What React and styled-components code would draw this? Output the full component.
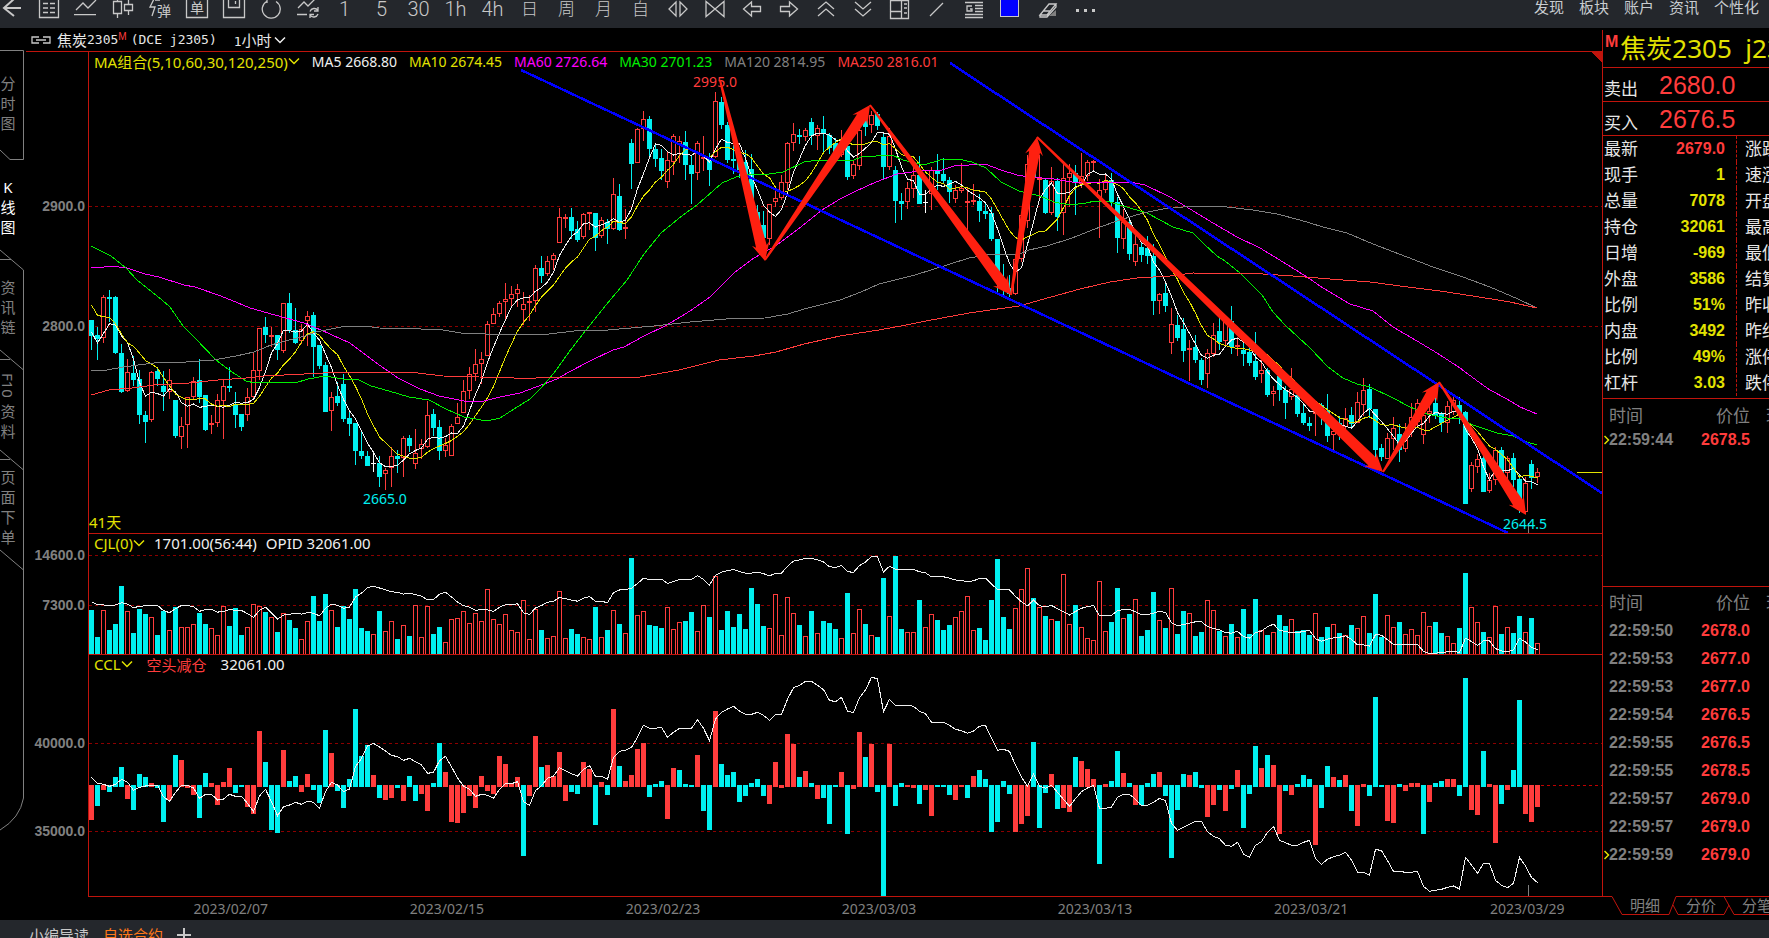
import styled, { createGlobalStyle } from "styled-components";

const RED = "#ff3c3c";
const CYAN = "#00f0f0";
const LINE = "#c0140c";
const YELLOW = "#e2e200";

const GlobalStyle = createGlobalStyle`
  * {
    box-sizing: border-box;
  }

  body {
    margin: 0;
    background: #000;
    overflow: hidden;
    font-family: "Noto Sans", "Noto Sans CJK SC", sans-serif;
    font-size: 14px;
    color: #e6e6e6;
  }

  button {
    padding: 0;
    border: none;
    background: none;
    font: inherit;
    color: inherit;
    cursor: pointer;
  }

  svg {
    display: block;
  }
`;

const Page = styled.div`
  display: flex;
  flex-direction: column;
  height: 100vh;
`;

const Toolbar = styled.header`
  display: flex;
  justify-content: space-between;
  align-items: flex-start;
  height: 28px;
  flex: none;
  background: #24272c;
  color: #c8c8c8;
  overflow: hidden;
`;

const Tools = styled.div`
  display: flex;
  margin-left: -7px;
`;

const ToolButton = styled.button`
  display: flex;
  justify-content: center;
  width: 37px;
  height: 18px;
  line-height: 18px;
  font-family: Roboto, "Noto Sans CJK SC", sans-serif;
  font-size: ${(p) => (p.$cjk ? 17 : 20)}px;
  font-weight: 300;
`;

const Menu = styled.nav`
  display: flex;
  gap: 15px;
  padding-right: 10px;
`;

const MenuLink = styled.a`
  font-size: 15px;
  line-height: 15px;
  color: #c8ccd0;
  text-decoration: none;
`;

const Body = styled.div`
  display: flex;
  flex: 1;
  min-height: 0;
`;

const SideTabs = styled.nav`
  position: relative;
  width: 26px;
  flex: none;
  padding-top: 22px;
`;

const SideFrame = styled.svg`
  position: absolute;
  left: 0;
  top: 0;
`;

const SideTab = styled.button`
  position: relative;
  display: flex;
  align-items: center;
  width: 24px;
  height: ${(p) => (p.$first ? 109 : 100)}px;
  padding-bottom: 4px;
  color: ${(p) => (p.$active ? "#fff" : "#808080")};
`;

const SideText = styled.span`
  width: 16px;
  font-size: 15px;
  line-height: 20px;
  word-break: break-all;
  text-align: center;
`;

const Sideways = styled.span`
  display: inline-block;
  writing-mode: vertical-rl;
  line-height: 16px;
`;

const Chart = styled.main`
  display: flex;
  flex-direction: column;
  flex: 1;
  min-width: 0;
`;

const ChartTitle = styled.div`
  display: flex;
  align-items: center;
  height: 24px;
  flex: none;
  padding-left: 5px;
  border-bottom: 1px solid ${LINE};
  font-family: "DejaVu Sans Mono", "Noto Sans CJK SC", monospace;
  font-size: 13px;
  white-space: pre;
`;

const Cjk = styled.span`
  font-size: 15px;
`;

const Flag = styled.sup`
  align-self: flex-start;
  margin-right: 4px;
  font-family: "Liberation Sans", sans-serif;
  font-size: 10px;
  line-height: 18px;
  color: ${RED};
`;

const Period = styled.button`
  display: flex;
  align-items: center;
  gap: 2px;
  margin-left: 17px;
`;

const Panel = styled.section`
  display: grid;
  grid-template-columns: 62px 1fr;
  flex: ${(p) => p.$size} 1 0;
  min-height: 0;
`;

const Axis = styled.div`
  position: relative;
`;

const Tick = styled.span`
  position: absolute;
  right: 3px;
  margin-top: -8px;
  font-family: "Liberation Sans", sans-serif;
  font-weight: bold;
  line-height: 16px;
  color: #808080;
`;

const Plot = styled.div`
  position: relative;
  min-height: 0;
  border-left: 1px solid ${LINE};
  border-top: ${(p) => (p.$first ? "none" : `1px solid ${LINE}`)};
  overflow: hidden;
`;

const Canvas = styled.svg`
  position: absolute;
  inset: 0;
  width: 100%;
  height: 100%;
  shape-rendering: ${(p) => (p.$smooth ? "auto" : "crispEdges")};
`;

const Legend = styled.div`
  position: absolute;
  left: 5px;
  top: 0;
  display: flex;
  align-items: center;
  gap: ${(p) => p.$gap || 12}px;
  height: 18px;
  font-size: ${(p) => (p.$large ? 15 : 14)}px;
  white-space: nowrap;
`;

const LegendButton = styled.button`
  display: flex;
  align-items: center;
  font-size: 15px;
  color: ${YELLOW};
`;

const Value = styled.span`
  color: ${(p) => p.$color || "#f0f0f0"};
`;

const Mark = styled.span`
  position: absolute;
  line-height: 20px;
  transform: translate(-50%, -50%);
  color: ${(p) => p.$color};
`;

const Days = styled.span`
  position: absolute;
  left: 0;
  bottom: 0;
  font-size: 15px;
  line-height: 22px;
  color: ${YELLOW};
`;

const Dates = styled.div`
  display: grid;
  grid-template-columns: repeat(6, 216fr) 112fr;
  height: 24px;
  flex: none;
  margin-left: 62px;
  padding-left: 6.7%;
  border-top: 1px solid ${LINE};
  line-height: 24px;
  color: #808080;
`;

const Quote = styled.aside`
  display: flex;
  flex-direction: column;
  width: 167px;
  flex: none;
  overflow: hidden;
  white-space: nowrap;
`;

const QuoteInner = styled.div`
  display: flex;
  flex-direction: column;
  flex: 1;
  min-height: 0;
  margin-top: 2px;
  border-left: 1px solid ${LINE};
`;

const QuoteTitle = styled.h1`
  display: flex;
  gap: 2px;
  height: 38px;
  flex: none;
  margin: 0;
  padding-left: 2px;
  border-bottom: 1px solid ${LINE};
  font-size: 26px;
  font-weight: normal;
  line-height: 37px;
  white-space: pre;
  color: ${YELLOW};
`;

const QuoteFlag = styled.span`
  font-family: "Liberation Sans", sans-serif;
  font-size: 16px;
  font-weight: bold;
  line-height: 24px;
  color: ${RED};
`;

const OfferRow = styled.div`
  display: flex;
  align-items: center;
  height: 34px;
  flex: none;
  padding-left: 1px;
  border-bottom: 1px solid ${LINE};
`;

const OfferLabel = styled.span`
  width: 55px;
  padding-top: 8px;
  font-size: 17px;
  line-height: 20px;
`;

const OfferPrice = styled.span`
  font-family: "Liberation Sans", sans-serif;
  font-size: 25px;
  line-height: 28px;
  color: ${RED};
`;

const Stats = styled.table`
  width: 210px;
  flex: none;
  table-layout: fixed;
  border-spacing: 0;
  border-bottom: 1px solid ${LINE};
  padding-bottom: 2px;

  th,
  td {
    height: 26px;
    padding: 0;
    font-size: 17px;
    font-weight: normal;
    line-height: 24px;
    text-align: left;
  }

  th:first-child {
    width: 56px;
    padding-left: 1px;
  }

  th:last-child {
    padding-left: 8px;
    border-left: 1px dashed ${LINE};
  }
`;

const StatValue = styled.td`
  && {
    width: 77px;
    padding-right: 11px;
    font-family: "Liberation Sans", sans-serif;
    font-size: 16px;
    font-weight: bold;
    text-align: right;
    color: ${(p) => (p.$up ? RED : YELLOW)};
  }
`;

const TickBox = styled.div`
  flex: ${(p) => p.$size} 1 0;
  min-height: 0;
  border-bottom: ${(p) => (p.$open ? "none" : `1px solid ${LINE}`)};
  overflow: hidden;
`;

const Ticks = styled.table`
  width: 220px;
  table-layout: fixed;
  border-spacing: 0;

  th {
    height: 30px;
    padding: 0;
    font-size: 17px;
    font-weight: normal;
    text-align: left;
    color: #808080;
  }

  th:first-child,
  td:first-child {
    width: 87px;
    padding-left: 6px;
  }

  th:nth-child(2),
  td:nth-child(2) {
    width: 60px;
    text-align: right;
  }

  th:last-child {
    padding-left: 16px;
  }

  td {
    height: ${(p) => (p.$tight ? 22 : 28)}px;
    padding: 0;
    font-family: "Liberation Sans", sans-serif;
    font-size: 16px;
    font-weight: bold;
    color: #808080;
  }
`;

const TickTime = styled.td`
  position: relative;
`;

const Pointer = styled.svg`
  position: absolute;
  left: 1px;
  top: 50%;
  margin-top: -5px;
`;

const TickPrice = styled.td`
  && {
    color: ${RED};
  }
`;

const QuoteTabs = styled.nav`
  position: relative;
  display: flex;
  gap: 26px;
  height: 24px;
  flex: none;
  padding-left: 28px;
`;

const TabFrame = styled.svg`
  position: absolute;
  left: 0;
  top: 0;
`;

const QuoteTab = styled.button`
  position: relative;
  flex: none;
  font-size: 15px;
  line-height: 16px;
  height: 18px;
  color: #808080;
`;

const Footer = styled.footer`
  display: flex;
  gap: 14px;
  height: 18px;
  flex: none;
  padding-left: 29px;
  background: #24272c;
  overflow: hidden;
`;

const FooterTab = styled.button`
  height: 30px;
  font-size: 15px;
  line-height: 30px;
  color: ${(p) => (p.$active ? "#ff7818" : "#c8c8c8")};
`;

// body top, body bottom, high, low (chart y), one entry per hour
// c = falling, r = rising, w = unchanged
const candles = `
c 320 336 320 350|c 335 339 327 360|r 297 338 295 343|c 297 299 290 322|c 297 353 296 354|c 353 392 344 393
r 372 391 359 392|c 373 380 356 386|c 379 415 370 424|c 415 422 411 443|r 372 420 371 422|c 371 379 368 386
c 386 392 371 411|r 380 392 369 399|c 400 436 400 438|r 426 437 417 449|r 397 425 397 448|r 381 397 377 400
c 380 397 359 403|c 395 430 395 431|r 423 425 415 434|r 400 423 394 427|r 386 401 379 439|c 386 388 367 392
c 405 415 392 428|c 414 427 414 431|r 397 415 388 421|r 370 397 353 399|r 328 371 328 380|c 327 335 317 343
r 335 337 327 347|c 335 350 335 360|r 303 351 303 353|c 303 330 293 333|c 330 343 308 344|r 329 341 324 344
r 316 321 311 346|c 315 347 312 377|c 345 366 345 369|c 365 412 362 412|r 397 411 392 431|c 396 403 382 406
c 384 419 374 422|c 418 424 411 436|c 423 451 423 465|c 451 456 431 459|c 456 466 451 466|w 463 464 452 472
c 463 477 456 487|r 470 474 468 490|r 456 468 447 487|c 456 459 450 473|r 438 458 436 477|c 438 446 435 452
r 453 464 429 469|r 444 449 439 459|r 415 447 401 448|c 414 428 409 436|c 427 451 420 460|r 445 451 438 457
r 426 456 424 456|r 417 424 403 424|r 391 413 380 413|r 374 391 367 399|r 364 374 349 381|r 359 364 352 384
r 324 356 321 356|r 314 324 308 324|r 303 314 301 317|r 299 302 283 319|r 294 299 286 307|r 289 294 284 307
r 304 310 292 325|r 301 303 295 321|r 268 301 265 312|c 268 276 256 283|r 261 274 256 276|r 255 260 253 270
r 217 243 208 243|r 217 219 214 228|c 217 231 208 239|c 229 240 221 242|r 214 237 213 239|r 212 214 212 230
c 213 238 213 251|r 220 236 217 238|c 222 229 219 244|r 194 229 178 230|c 196 230 184 231|r 227 229 209 239
c 143 164 139 189|r 129 163 128 163|r 119 129 111 141|c 119 149 116 156|c 149 159 143 167|c 158 171 149 180
r 160 182 151 188|r 136 162 134 175|r 141 145 136 163|c 142 165 131 180|c 165 174 155 204|r 143 173 141 180
r 157 159 136 171|c 159 170 153 186|r 101 157 92 158|c 102 125 97 129|c 125 160 122 163|c 159 161 145 174
c 160 170 150 178|c 162 176 150 180|c 169 216 154 218|c 212 226 205 232|c 225 238 211 245|r 204 239 204 245
r 198 202 186 207|r 182 198 175 200|r 143 183 142 190|r 134 143 123 151|c 135 137 129 144|r 130 137 128 141
c 122 136 118 145|r 128 136 125 150|c 129 134 116 153|c 135 148 133 154|c 143 153 138 158|r 143 155 130 157
c 146 177 143 180|r 164 176 160 179|r 130 166 128 170|c 118 127 112 136|r 115 125 111 133|c 114 126 112 130
c 137 167 133 180|r 136 167 128 170|c 170 201 166 223|c 201 204 193 220|r 188 202 182 209|r 175 189 167 198
c 175 204 156 204|w 202 203 190 213|r 170 194 167 210|c 170 174 154 190|c 174 181 158 183|c 180 192 177 203
r 190 199 185 203|r 188 191 163 193|r 201 203 188 233|r 200 202 184 205|c 201 211 194 222|c 211 214 202 219
c 213 239 207 241|c 239 280 239 292|c 280 290 264 296|c 288 294 275 297|r 259 294 255 295|r 215 259 212 262
r 164 221 155 228|c 155 178 146 180|r 178 180 155 200|c 180 213 178 214|r 181 213 167 215|c 181 217 178 231
r 178 213 161 235|r 173 178 164 207|c 173 183 165 215|r 176 184 153 188|r 162 176 160 181|r 161 163 160 171
r 190 198 179 238|r 181 190 173 193|c 180 202 173 208|c 202 238 197 253|r 222 239 209 249|c 222 254 220 260
r 244 262 235 266|c 247 255 242 262|c 248 256 236 264|c 256 301 244 315|r 294 301 293 314|c 293 306 283 312
r 324 343 308 354|c 325 338 315 341|c 329 351 318 362|r 348 350 340 381|c 347 360 335 363|c 360 380 358 385
r 353 374 349 388|r 335 354 323 357|c 331 342 318 350|r 322 341 320 345|c 321 347 306 354|r 345 347 337 356
c 350 354 342 366|c 352 363 347 366|c 361 377 332 380|r 370 374 360 383|c 370 395 368 397|r 391 394 386 406
c 376 390 372 401|c 390 403 386 419|r 389 397 368 400|c 395 414 388 417|c 413 423 405 425|c 423 426 417 431
r 410 414 405 436|c 405 414 403 425|c 411 436 394 442|r 431 435 427 450|c 423 432 416 440|r 418 427 408 435
c 415 424 407 428|r 402 423 392 423|r 390 405 378 416|c 389 409 384 418|c 409 450 409 460|c 448 457 444 461
r 438 459 433 459|r 428 439 417 450|c 434 450 424 462|r 433 449 423 452|r 417 432 403 437|r 403 422 399 427
r 415 435 412 444|r 411 414 406 423|c 403 416 395 419|c 414 423 412 432|r 406 423 401 433|r 400 412 395 415
c 405 415 397 424|c 412 504 411 504|r 465 489 462 492|r 459 467 454 473|c 458 492 452 492|r 480 491 473 493
r 450 480 447 485|c 450 474 447 480|r 458 473 456 482|c 458 480 453 487|c 479 510 475 513|r 483 512 477 514
c 464 478 460 489|r 472 477 468 483`
  .trim()
  .split(/[|\n]/)
  .map((row) => {
    const [kind, ...n] = row.split(" ");
    const [top, bottom, high, low] = n.map(Number);
    return { kind, top, bottom, high, low };
  });

const volumes = `
610 637 610 630 624 586 611 633 609 614 617 635 611 630 607 627 627 624 613 624 628 635 606 626 608 635 627 604 606 612
617 632 613 620 628 639 621 596 621 594 610 627 606 619 589 628 631 634 611 631 621 639 625 636 605 637 606 634 627 642
619 618 611 623 613 621 589 619 624 614 630 632 600 639 609 630 638 636 591 638 629 634 637 639 607 637 630 610 624 633
558 615 611 625 626 628 607 629 622 621 612 631 605 617 576 630 611 627 614 629 588 604 626 628 594 635 597 613 625 636
611 633 621 623 629 638 593 633 609 624 635 637 578 616 556 629 632 632 600 627 614 620 630 625 617 611 596 630 628 640
600 559 617 629 608 589 568 598 607 616 619 621 574 624 605 627 638 640 581 631 622 588 618 614 599 636 630 592 620 628
588 634 611 613 636 632 600 610 631 636 624 637 609 634 599 630 635 632 615 626 619 631 630 635 613 637 627 624 633 635
625 628 616 633 594 637 615 627 622 634 629 635 612 626 622 633 636 643 628 573 607 622 632 637 606 634 627 633 616 632
618 643`
  .trim()
  .split(/\s+/)
  .map(Number);

const interest = `
742 760 763 769 763 748 757 781 772 768 766 766 800 814 787 766 766 774 805 793 793 810 807 793 799 799 820 845 798 778
815 857 830 825 817 823 814 817 835 785 757 765 785 777 710 685 648 640 651 663 676 680 691 685 695 705 730 727 692 679
710 744 768 778 799 793 796 805 778 761 761 755 815 826 782 767 745 738 713 722 731 738 718 707 739 739 748 682 664 661
652 622 586 595 595 592 622 607 595 595 595 569 595 632 567 547 537 529 543 553 553 547 556 571 553 553 508 473 466 454
454 466 479 511 515 502 543 548 503 480 442 446 545 508 526 526 526 529 544 551 577 577 577 586 598 602 610 603 589 586
625 661 658 664 706 742 769 731 768 775 766 787 808 829 806 785 774 766 835 835 831 802 793 793 808 826 826 817 805 812
880 901 892 883 874 874 905 919 926 946 949 937 972 982 946 935 907 889 931 938 946 946 937 931 985 1003 988 980 976 967
990 1027 1027 1035 958 962 992 1024 1024 1027 1027 1024 1069 1084 1081 1078 1072 1068 1077 982 1005 1030 1000 1000 1051
1066 1073 1060 982 1008 1042 1058`
  .trim()
  .split(/\s+/)
  .map(Number);

// change in open interest: colour and signed height
const changes = `
r-34 c-20 r-4 c-6 c9 c19 r-13 c-24 c12 c9 r3 c-2 c-36 r-14 c31 r26 r-2 r-9 c-32 c13 r3 r-19 r4 r18 c-7 c1 r-21 r-28 r55 c24
c-44 c-47 r36 c5 c10 r-6 r12 c-4 c-17 c56 r33 c-5 c-22 c7 c77 c30 c41 r11 c-12 r-14 r-12 c-2 r-15 c10 c-15 r-8 r-25 c3 c43 r14
r-36 r-37 r-27 r-10 r-22 r10 r-5 r-8 r30 r22 r2 r9 c-70 r-10 r50 c19 r21 r10 r34 r-15 c-6 c-8 r24 r17 c-39 r4 c-9 r77 c20 r5
r11 r37 r43 c-11 c2 c5 r-33 r18 c16 c2 c-1 r31 c-25 c-44 r75 c22 c11 c14 c-16 c-10 c3 c7 c-10 r-18 r24 r-2 r52 r42 c9 r15
c3 r-13 c-12 c-38 c-1 r14 c-48 r-3 r54 c29 r42 c-6 c-110 r42 c-20 c3 r-1 r-2 c-18 r-4 r-30 c1 c1 c-9 r-14 r-1 c-12 r10 c16 c7
c-46 c-36 c5 c-8 r-46 r-38 r-30 c44 c-42 c-7 r12 c-23 r-22 r-26 c29 r25 r17 r7 c-78 r2 c5 c35 r13 c3 r-19 c-19 c3 c12 r14 c-10
c-72 c-24 c12 r11 c14 c-2 r-31 r-19 c-4 r-25 c-3 r16 c-42 c-8 c40 r18 c31 r21 r-48 c-5 r-9 c2 c11 c7 r-59 c-22 c20 r9 c6 r11
c-25 r-40 r2 c-10 c89 c-1 r-35 r-37 c2 r-5 r3 r3 c-48 r-16 c3 c5 r7 r7 c-10 c108 r-24 r-29 c35 r2 r-57 c-18 r-4 c16 c86 r-28
r-36 r-21`
  .trim()
  .split(/\s+/)
  .map((s) => ({ kind: s[0], size: Number(s.slice(1)) }));

const xAt = (i) => 91.5 + i * 6;

// closes of the nine hours before the first visible one
const earlier = [235, 285, 290, 290, 290, 284, 345, 347, 348];
const closes = [
  ...earlier,
  ...candles.map((c) => (c.kind === "r" ? c.top : c.bottom)),
];

const average = (span) =>
  candles
    .map((_, i) => {
      const end = i + earlier.length + 1;
      const sum = closes.slice(end - span, end).reduce((a, b) => a + b, 0);
      return `${xAt(i)},${sum / span}`;
    })
    .join(" ");

const MA30 =
  "91,246 111,256 126,268 137,280 162,300 170,307 183,326 195,338 216,360 232,372 246,381 255,383 273,382 295,383 308,379 325,376 343,379 359,380 371,386 389,391 409,397 429,400 446,409 464,417 487,421 500,418 514,409 530,399 541,388 554,373 569,352 586,330 606,305 627,280 644,254 661,233 683,215 697,205 722,183 736,177 749,174 769,174 783,172 804,162 819,160 854,160 861,157 892,155 903,160 924,165 940,160 958,159 972,162 986,168 1001,182 1019,191 1040,196 1054,202 1070,205 1086,203 1095,201 1110,202 1130,208 1147,213 1173,227 1193,233 1203,243 1217,256 1225,261 1240,273 1247,280 1262,295 1273,312 1285,325 1310,348 1328,367 1343,378 1357,384 1370,387 1393,398 1410,407 1427,414 1447,418 1458,418 1473,425 1497,433 1513,436 1527,442 1537,445";
const MA60 =
  "91,267 104,267 111,266 127,268 145,274 159,277 184,285 195,287 218,295 231,300 250,308 275,315 304,323 321,330 350,343 375,362 398,378 420,389 439,396 464,401 484,401 500,397 520,393 536,387 557,379 569,372 590,361 613,350 624,347 644,336 667,325 690,311 710,297 734,273 754,258 777,245 797,230 822,210 840,199 854,192 876,182 897,174 919,171 942,170 954,166 985,164 1001,170 1017,175 1029,177 1054,179 1072,182 1100,183 1130,182 1145,185 1170,197 1190,209 1213,223 1237,237 1260,248 1283,262 1307,277 1323,288 1350,304 1373,311 1393,327 1417,341 1437,353 1460,368 1480,383 1490,390 1507,399 1520,407 1537,414";
const MA120 =
  "91,370 107,370 123,367 154,363 186,362 214,360 236,356 254,352 271,345 289,340 305,336 316,332 341,327 364,326 379,328 421,329 443,330 461,333 486,334 549,334 583,330 608,330 654,326 690,322 726,319 765,318 788,314 804,309 840,300 861,292 879,284 915,275 947,265 969,258 986,255 1020,254 1029,250 1047,246 1072,238 1100,227 1120,220 1143,213 1163,209 1183,207 1197,206 1227,207 1253,210 1277,214 1300,220 1323,227 1347,233 1373,244 1407,257 1433,267 1463,277 1490,287 1518,299 1537,308";
const MA250 =
  "91,395 109,390 132,388 154,385 189,383 218,380 246,378 264,376 304,374 343,372 386,372 418,373 443,376 479,377 514,378 536,378 560,377 601,377 626,378 640,377 679,370 719,360 754,356 776,352 804,344 840,336 879,330 901,326 926,321 969,313 1019,306 1051,297 1080,289 1110,282 1137,278 1170,276 1193,273 1263,274 1293,276 1330,279 1370,282 1400,286 1440,291 1473,296 1510,302 1537,308";

const arrows = [
  [720, 80, 765, 261],
  [765, 260, 870, 105],
  [870, 105, 1011, 295],
  [1011, 295, 1037, 137],
  [1037, 137, 1383, 472],
  [1383, 472, 1439, 382],
  [1439, 382, 1526, 515],
];

function arrowPoints([x1, y1, x2, y2]) {
  const len = Math.hypot(x2 - x1, y2 - y1);
  const ux = (x2 - x1) / len;
  const uy = (y2 - y1) / len;
  // along = distance back from the tip, side = distance off the shaft
  const at = (along, side) =>
    `${x2 - ux * along - uy * side},${y2 - uy * along + ux * side}`;
  return [
    at(len, 1),
    at(15, 5.5),
    at(18, 9),
    at(0, 0),
    at(18, -9),
    at(15, -5.5),
    at(len, -1),
  ].join(" ");
}

function GridLine({ y, color = "#8c0000" }) {
  return (
    <line
      x1="89"
      x2="1602"
      y1={y + 0.5}
      y2={y + 0.5}
      stroke={color}
      strokeDasharray="3 3"
    />
  );
}

function Candle({ i, kind, top, bottom, high, low }) {
  const x = xAt(i);
  const color = { c: CYAN, r: RED, w: "#fff" }[kind];
  return (
    <g>
      <rect x={x - 0.5} y={high} width="1" height={low - high} fill={color} />
      {kind === "r" && bottom - top > 2 ? (
        <rect
          x={x - 2}
          y={top + 0.5}
          width="4"
          height={bottom - top - 1}
          fill="#000"
          stroke={color}
        />
      ) : (
        <rect
          x={x - 2.5}
          y={top}
          width="5"
          height={bottom - top}
          fill={color}
        />
      )}
    </g>
  );
}

function Line({ points, color }) {
  return <polyline points={points} fill="none" stroke={color} />;
}

function Chevron({ color }) {
  return (
    <svg width="12" height="8" fill="none" stroke={color} strokeWidth="1.5">
      <path d="M1 1.5l5 5 5-5" />
    </svg>
  );
}

const icons = {
  back: <path d="M21 8H4M14 -1L4 8l10 8" strokeWidth="2" />,
  list: (
    <path d="M2.5 -2V17.5H21.5V-2M6 3.5h5M13 3.5h5M6 8h5M13 8h5M6 12.5h5M13 12.5h5" />
  ),
  trend: <path d="M2 10l7-7 5 5 8-8M0 14.7h22" />,
  candles: (
    <path d="M2.5 1.5h8v12h-8zM6.5 -1v2M6.5 14v4M13.5 4.5h8v6h-8zM17.5 0v4M17.5 11v4" />
  ),
  save: <path d="M1.5 -2V17.5H22.5V-2M6.5 -2V7.5H17.5V-2M13.5 1v3" />,
  power: <path d="M8 1.2A9 9 0 1 0 17 1.5M8 -3v6" />,
  refresh: (
    <path d="M2 8l6-6 4 4 8-8M1 14.5h10M14 11.5a4.5 4.5 0 0 1 8-1M22 7v4h-4M22 14a4.5 4.5 0 0 1-8 1M14 18v-3.5h4" />
  ),
  expand: <path d="M10 2L3 9l7 7zM14 2l7 7-7 7z" />,
  compress: <path d="M3 1.5v15l9-7.5zM21 1.5v15L12 9z" />,
  left: <path d="M3.5 9l8-7v4.500h9v5h-9V16z" />,
  right: <path d="M20.5 9l-8-7v4.500h-9v5h9V16z" />,
  up: <path d="M4 9l8-7 8 7M4 16l8-7 8 7" />,
  down: <path d="M4 2l8 7 8-7M4 9l8 7 8-7" />,
  layout: (
    <path d="M2.5 .5h18v18h-18zM13.5 .5v18M2.5 11.5h11M16 4h3M16 8h3M16 13h3" />
  ),
  slash: <path d="M18 3L5 16" />,
  lines: (
    <path d="M3 2.500h18M13 5.500h8M13 8.500h8M13 11.500h8M3 14.500h18M3 17.500h18M10 6H5v5h5V9H8" />
  ),
  eraser: (
    <>
      <path d="M4 15l9-11h7l-9 11zM7 11h7M4 15v2h7l9-10V4" />
      <path d="M13 16h7v-6z" fill="#808080" stroke="none" />
    </>
  ),
};

function Icon({ name }) {
  return (
    <svg
      width="24"
      height="20"
      fill="none"
      stroke="#c8c8c8"
      strokeWidth="1.3"
      aria-hidden="true"
    >
      {icons[name]}
    </svg>
  );
}

function BoxedIcon({ boxed, char }) {
  return (
    <svg width="24" height="20" fill="none" stroke="#c8c8c8" strokeWidth="1.3">
      {boxed ? (
        <path d="M1.5 -2V17.5H22.5V-2" />
      ) : (
        <path d="M6 -1L2 7h5l-3 9M7 0h5" />
      )}
      <text
        x={boxed ? 5 : 9}
        y={boxed ? 13 : 16}
        fontSize="14"
        fontWeight="400"
        fill="#c8c8c8"
        stroke="none"
      >
        {char}
      </text>
    </svg>
  );
}

const tools = [
  { label: "返回", icon: "back" },
  { label: "报价", icon: "list" },
  { label: "分时", icon: "trend" },
  { label: "K线", icon: "candles" },
  { label: "闪电弹单", char: "弹" },
  { label: "下单", char: "单", boxed: true },
  { label: "保存", icon: "save" },
  { label: "重置", icon: "power" },
  { label: "切换", icon: "refresh" },
  { text: "1" },
  { text: "5" },
  { text: "30" },
  { text: "1h" },
  { text: "4h" },
  { text: "日", cjk: true },
  { text: "周", cjk: true },
  { text: "月", cjk: true },
  { text: "自", cjk: true },
  { label: "放大", icon: "expand" },
  { label: "缩小", icon: "compress" },
  { label: "左移", icon: "left" },
  { label: "右移", icon: "right" },
  { label: "上翻", icon: "up" },
  { label: "下翻", icon: "down" },
  { label: "布局", icon: "layout" },
  { label: "画线", icon: "slash" },
  { label: "指标", icon: "lines" },
  { label: "颜色", color: "#00f" },
  { label: "擦除", icon: "eraser" },
  { label: "更多", more: true },
];

function Tool({ tool }) {
  let content = tool.text;
  if (tool.icon) content = <Icon name={tool.icon} />;
  if (tool.char) content = <BoxedIcon boxed={tool.boxed} char={tool.char} />;
  if (tool.color)
    content = (
      <svg width="24" height="20">
        <rect
          x="1.5"
          y="-2"
          width="18"
          height="18.5"
          fill={tool.color}
          stroke="#c8c8c8"
        />
      </svg>
    );
  if (tool.more)
    content = (
      <svg width="24" height="20" fill="#c8c8c8">
        <path d="M3 9h3v3H3zM11 9h3v3h-3zM19 9h3v3h-3z" />
      </svg>
    );
  return (
    <ToolButton $cjk={tool.cjk} aria-label={tool.label}>
      {content}
    </ToolButton>
  );
}

const averages = [
  { text: "MA5 2668.80", color: "#f0f0f0" },
  { text: "MA10 2674.45", color: YELLOW },
  { text: "MA60 2726.64", color: "#f0f" },
  { text: "MA30 2701.23", color: "#00f000" },
  { text: "MA120 2814.95", color: "#808080" },
  { text: "MA250 2816.01", color: RED },
];

const marks = [
  { text: "2995.0", x: 715, y: 82, color: RED },
  { text: "2665.0", x: 385, y: 499, color: CYAN },
  { text: "2644.5", x: 1525, y: 524, color: CYAN },
];

const dates = [
  "2023/02/07",
  "2023/02/15",
  "2023/02/23",
  "2023/03/03",
  "2023/03/13",
  "2023/03/21",
  "2023/03/29",
];

const stats = [
  ["最新", "2679.0", "涨跌"],
  ["现手", "1", "速涨"],
  ["总量", "7078", "开盘"],
  ["持仓", "32061", "最高"],
  ["日增", "-969", "最低"],
  ["外盘", "3586", "结算"],
  ["比例", "51%", "昨收"],
  ["内盘", "3492", "昨结"],
  ["比例", "49%", "涨停"],
  ["杠杆", "3.03", "跌停"],
];

const bigTrades = [["22:59:44", "2678.5"]];

const trades = [
  ["22:59:50", "2678.0"],
  ["22:59:53", "2677.0"],
  ["22:59:53", "2677.0"],
  ["22:59:54", "2676.5"],
  ["22:59:55", "2676.5"],
  ["22:59:55", "2678.5"],
  ["22:59:57", "2679.0"],
  ["22:59:57", "2679.0"],
  ["22:59:59", "2679.0"],
];

function AxisTicks({ ticks, top, height }) {
  return (
    <Axis>
      {ticks.map(([label, y]) => (
        <Tick key={label} style={{ top: `${((y - top) / height) * 100}%` }}>
          {label}
        </Tick>
      ))}
    </Axis>
  );
}

function PricePanel() {
  return (
    <Panel $size={481}>
      <AxisTicks
        ticks={[
          ["2900.0", 206],
          ["2800.0", 326],
        ]}
        top={52}
        height={481}
      />
      <Plot $first>
        <Canvas viewBox="89 52 1513 481" preserveAspectRatio="none">
          <GridLine y={206} />
          <GridLine y={326} />
          {candles.map((c, i) => (
            <Candle key={i} i={i} {...c} />
          ))}
          <Line points={average(5)} color="#f0f0f0" />
          <Line points={average(10)} color={YELLOW} />
          <Line points={MA60} color="#f0f" />
          <Line points={MA30} color="#00f000" />
          <Line points={MA120} color="#808080" />
          <Line points={MA250} color={RED} />
          <g stroke="#00f" strokeWidth="2.5">
            <line x1="521" y1="70" x2="1508" y2="533" />
            <line x1="950" y1="63" x2="1602" y2="493" />
          </g>
          <line x1="1577" x2="1602" y1="472.5" y2="472.5" stroke={YELLOW} />
          <line x1="1528.5" x2="1528.5" y1="523" y2="533" stroke="#808080" />
          <path d="M1591 52h11v11z" fill={LINE} />
        </Canvas>
        <Legend>
          <LegendButton>
            MA组合(5,10,60,30,120,250)
            <Chevron color={YELLOW} />
          </LegendButton>
          {averages.map((a) => (
            <Value key={a.text} $color={a.color}>
              {a.text}
            </Value>
          ))}
        </Legend>
        {marks.map((m) => (
          <Mark
            key={m.text}
            $color={m.color}
            style={{
              left: `${((m.x - 89) / 1513) * 100}%`,
              top: `${((m.y - 52) / 481) * 100}%`,
            }}
          >
            {m.text}
          </Mark>
        ))}
        <Days>41天</Days>
        <Canvas $smooth viewBox="89 52 1513 481" preserveAspectRatio="none">
          {arrows.map((a) => (
            <polygon key={a.join()} points={arrowPoints(a)} fill="#ff2010" />
          ))}
        </Canvas>
      </Plot>
    </Panel>
  );
}

function VolumePanel() {
  const line = interest
    .map((v, i) => `${xAt(i)},${530 + (79 + (v - 442) / 2.2) / 3}`)
    .join(" ");
  return (
    <Panel $size={121}>
      <AxisTicks
        ticks={[
          ["14600.0", 555],
          ["7300.0", 605],
        ]}
        top={533}
        height={121}
      />
      <Plot>
        <Canvas viewBox="89 534 1513 120" preserveAspectRatio="none">
          <GridLine y={555} />
          <GridLine y={605} />
          {volumes.map((y, i) =>
            candles[i].kind === "c" ? (
              <rect
                key={i}
                x={xAt(i) - 2.5}
                y={y}
                width="5"
                height={654 - y}
                fill={CYAN}
              />
            ) : (
              <rect
                key={i}
                x={xAt(i) - 2}
                y={y + 0.5}
                width="4"
                height={656 - y}
                fill="#000"
                stroke={RED}
              />
            )
          )}
          <Line points={line} color="#f0f0f0" />
          <line x1="1528.5" x2="1528.5" y1="644" y2="654" stroke="#808080" />
        </Canvas>
        <Legend $large $gap={9}>
          <LegendButton>
            CJL(0)
            <Chevron color={YELLOW} />
          </LegendButton>
          <Value>1701.00(56:44)</Value>
          <Value>OPID 32061.00</Value>
        </Legend>
      </Plot>
    </Panel>
  );
}

function InterestPanel() {
  const line = interest.map((v, i) => `${xAt(i)},${530 + v / 3}`).join(" ");
  return (
    <Panel $size={242}>
      <AxisTicks
        ticks={[
          ["40000.0", 743],
          ["35000.0", 831],
        ]}
        top={654}
        height={242}
      />
      <Plot>
        <Canvas viewBox="89 655 1513 241" preserveAspectRatio="none">
          <GridLine y={743} />
          <GridLine y={785} color="#c00000" />
          <GridLine y={831} />
          {changes.map(({ kind, size }, i) => (
            <rect
              key={i}
              x={xAt(i) - 2.5}
              y={size > 0 ? 786 - size : 785}
              width="5"
              height={Math.abs(size) + 1}
              fill={kind === "c" ? CYAN : RED}
            />
          ))}
          <Line points={line} color="#f0f0f0" />
          <line x1="1528.5" x2="1528.5" y1="885" y2="896" stroke="#808080" />
        </Canvas>
        <Legend $large $gap={14}>
          <LegendButton>
            CCL
            <Chevron color={YELLOW} />
          </LegendButton>
          <Value $color={RED}>空头减仓</Value>
          <Value>32061.00</Value>
        </Legend>
      </Plot>
    </Panel>
  );
}

function TradeTable({ rows, tight }) {
  return (
    <Ticks $tight={tight}>
      <thead>
        <tr>
          <th>时间</th>
          <th>价位</th>
          <th>现手</th>
        </tr>
      </thead>
      <tbody>
        {rows.map(([time, price], i) => (
          <tr key={i}>
            <TickTime>
              {i === rows.length - 1 && (
                <Pointer width="6" height="10" fill="none" stroke={YELLOW}>
                  <path d="M.5 1l4 4-4 4" strokeWidth="1.5" />
                </Pointer>
              )}
              {time}
            </TickTime>
            <TickPrice>{price}</TickPrice>
            <td />
          </tr>
        ))}
      </tbody>
    </Ticks>
  );
}

function App() {
  return (
    <>
      <GlobalStyle />
      <Page>
        <Toolbar>
          <Tools>
            {tools.map((tool) => (
              <Tool key={tool.label || tool.text} tool={tool} />
            ))}
          </Tools>
          <Menu>
            {["发现", "板块", "账户", "资讯", "个性化"].map((name) => (
              <MenuLink key={name} href="#">
                {name}
              </MenuLink>
            ))}
          </Menu>
        </Toolbar>

        <Body>
          <SideTabs>
            <SideFrame width="26" height="810" fill="none" stroke="#808080">
              <path d="M0 22.5H23.5V131.5H10L0 122" />
              <path d="M0 231.5H11M0 222L23.5 242V770Q20 790 0 802" />
              <path d="M0 331.5H10M0 322L23.5 342M0 431.5H10M0 422L23.5 442M0 522L23.5 542" />
            </SideFrame>
            <SideTab $first>
              <SideText>分时图</SideText>
            </SideTab>
            <SideTab $active>
              <SideText>K线图</SideText>
            </SideTab>
            <SideTab>
              <SideText>资讯链</SideText>
            </SideTab>
            <SideTab>
              <SideText>
                <Sideways>F10</Sideways>资料
              </SideText>
            </SideTab>
            <SideTab>
              <SideText>页面下单</SideText>
            </SideTab>
          </SideTabs>

          <Chart>
            <ChartTitle>
              <svg
                width="26"
                height="8"
                fill="none"
                stroke="#c8c8c8"
                strokeWidth="1.3"
              >
                <path d="M8 1H1v6h7M12 1h7v6h-7M5 4h10" />
              </svg>
              <Cjk>焦炭</Cjk>2305<Flag>M</Flag>(DCE j2305)
              <Period>
                <span>
                  1<Cjk>小时</Cjk>
                </span>
                <Chevron color="#f0f0f0" />
              </Period>
            </ChartTitle>
            <PricePanel />
            <VolumePanel />
            <InterestPanel />
            <Dates>
              {dates.map((d) => (
                <span key={d}>{d}</span>
              ))}
            </Dates>
          </Chart>

          <Quote>
            <QuoteInner>
              <QuoteTitle>
                <QuoteFlag>M</QuoteFlag>
                {"焦炭2305  j2305"}
              </QuoteTitle>
              <OfferRow>
                <OfferLabel>卖出</OfferLabel>
                <OfferPrice>2680.0</OfferPrice>
              </OfferRow>
              <OfferRow>
                <OfferLabel>买入</OfferLabel>
                <OfferPrice>2676.5</OfferPrice>
              </OfferRow>
              <Stats>
                <tbody>
                  {stats.map(([label, value, next], i) => (
                    <tr key={i}>
                      <th>{label}</th>
                      <StatValue $up={i === 0}>{value}</StatValue>
                      <th>{next}</th>
                    </tr>
                  ))}
                </tbody>
              </Stats>
              <TickBox $size={187}>
                <TradeTable rows={bigTrades} tight />
              </TickBox>
              <TickBox $size={310} $open>
                <TradeTable rows={trades} />
              </TickBox>
            </QuoteInner>
            <QuoteTabs>
              <TabFrame width="167" height="24" fill="none" stroke={LINE}>
                <path d="M0 .5H10L20 18.5H67L74 .5H167" />
                <path d="M71 9l5 9.500h46l5-9.500M122 .5l10 18H167" />
              </TabFrame>
              <QuoteTab>明细</QuoteTab>
              <QuoteTab>分价</QuoteTab>
              <QuoteTab>分笔</QuoteTab>
            </QuoteTabs>
          </Quote>
        </Body>

        <Footer>
          <FooterTab>小编导读</FooterTab>
          <FooterTab $active>自选合约</FooterTab>
          <FooterTab aria-label="添加">
            <svg width="14" height="14" stroke="#c8c8c8" strokeWidth="2">
              <path d="M7 0v14M0 7h14" />
            </svg>
          </FooterTab>
        </Footer>
      </Page>
    </>
  );
}

export default App;
